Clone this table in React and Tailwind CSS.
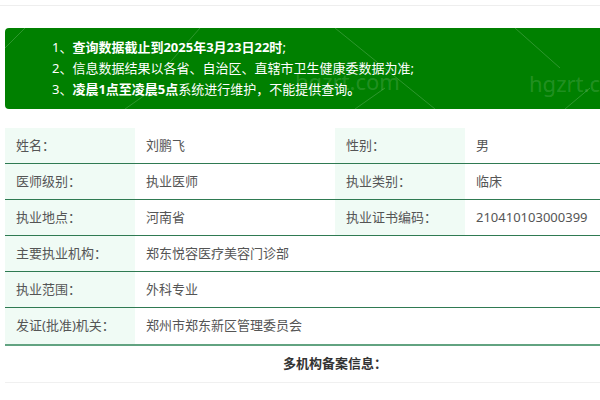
const NOTAS = [
  [{ t: "1、", b: false }, { t: "查询数据截止到2025年3月23日22时", b: true }, { t: ";", b: false }],
  [{ t: "2、信息数据结果以各省、自治区、直辖市卫生健康委数据为准;", b: false }],
  [
    { t: "3、", b: false },
    { t: "凌晨1点至凌晨5点", b: true },
    { t: "系统进行维护，不能提供查询", b: false },
    { t: "。", b: true },
  ],
];

const FILAS_DOBLES = [
  ["姓名：", "刘鹏飞", "性别：", "男"],
  ["医师级别：", "执业医师", "执业类别：", "临床"],
  ["执业地点：", "河南省", "执业证书编码：", "210410103000399"],
];

const FILAS_SIMPLES = [
  ["主要执业机构：", "郑东悦容医疗美容门诊部"],
  ["执业范围：", "外科专业"],
  ["发证(批准)机关：", "郑州市郑东新区管理委员会"],
];

function Aviso() {
  return (
    <div className="relative ml-[5px] mt-[22px] h-[81px] w-[620px] overflow-hidden rounded-[4px] bg-[#008000] py-[9px] pl-[47px]">
      <svg className="absolute inset-0" width="620" height="81">
        <g stroke="#ffffff" strokeOpacity="0.18" strokeWidth="1">
          <line x1="0" y1="20" x2="20" y2="0" />
          <line x1="195" y1="0" x2="160" y2="40" />
          <line x1="330" y1="0" x2="430" y2="81" />
          <line x1="510" y1="0" x2="555" y2="40" />
          <line x1="120" y1="81" x2="150" y2="60" />
          <line x1="350" y1="81" x2="380" y2="60" />
          <line x1="560" y1="81" x2="585" y2="60" />
          <line x1="595" y1="60" x2="615" y2="81" />
        </g>
      </svg>
      <span className="absolute left-[290px] top-[42px] text-[22px] leading-none text-white/15">hgzrt.com</span>
      <span className="absolute left-[524px] top-[44px] text-[22px] leading-none text-white/15">hgzrt.com</span>
      {NOTAS.map((linea, i) => (
        <p key={i} className="relative text-[13px] leading-[21px] text-white">
          {linea.map((parte, j) => (
            <span key={j} className={parte.b ? "font-bold" : ""}>
              {parte.t}
            </span>
          ))}
        </p>
      ))}
    </div>
  );
}

function Celda({ etiqueta, children }) {
  return (
    <div className={`flex items-center pl-[11px] ${etiqueta ? "bg-[#f0fbf5]" : ""}`}>{children}</div>
  );
}

export default function App() {
  return (
    <div
      className="h-[400px] w-[600px] overflow-hidden bg-white text-[13px] text-[#555555]"
      style={{ fontFamily: '"Noto Sans", "Noto Sans CJK SC", sans-serif' }}
    >
      <div className="mt-[5px] h-px w-full bg-[#eeeeee]" />
      <Aviso />

      <div className="ml-[5px] mt-[19px] w-[620px]">
        {FILAS_DOBLES.map((fila) => (
          <div key={fila[0]} className="grid h-9 grid-cols-[130px_200px_130px_1fr] border-b border-[#2f7a52]">
            <Celda etiqueta>{fila[0]}</Celda>
            <Celda>{fila[1]}</Celda>
            <Celda etiqueta>{fila[2]}</Celda>
            <Celda>{fila[3]}</Celda>
          </div>
        ))}
        {FILAS_SIMPLES.map((fila, i) => (
          <div
            key={fila[0]}
            className={`grid grid-cols-[130px_1fr] ${
              i === FILAS_SIMPLES.length - 1
                ? "h-[38px] border-b-2 border-[#62a381]"
                : "h-9 border-b border-[#2f7a52]"
            }`}
          >
            <Celda etiqueta>{fila[0]}</Celda>
            <Celda>{fila[1]}</Celda>
          </div>
        ))}
        <div className="flex h-[37px] items-center border-b border-[#f0f0f0] pl-[278px] font-bold text-[#333333]">
          多机构备案信息：
        </div>
      </div>
    </div>
  );
}
